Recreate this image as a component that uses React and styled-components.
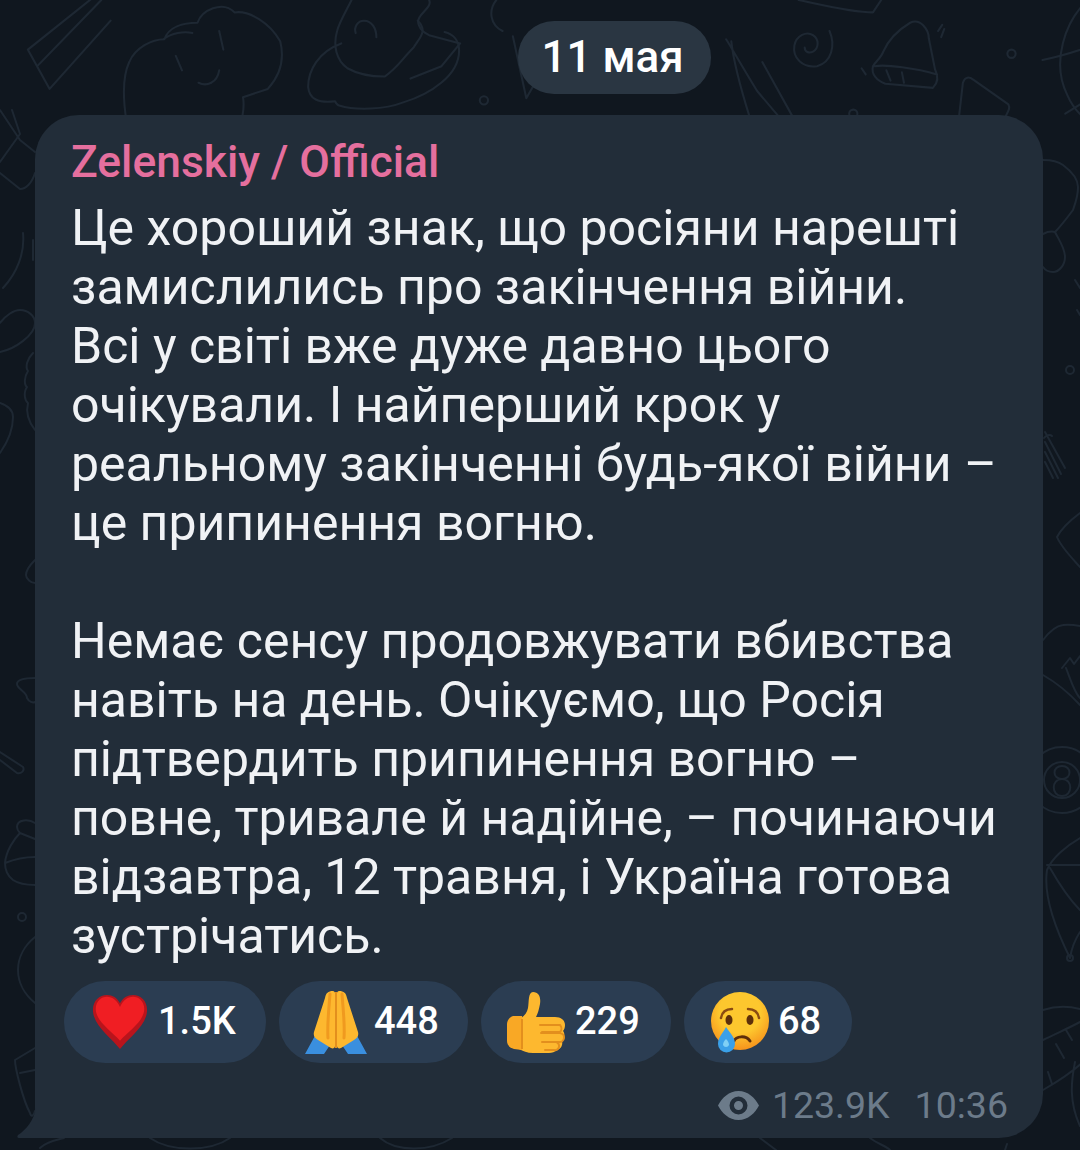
import React from 'react';
import styled, { createGlobalStyle } from 'styled-components';

const GlobalStyle = createGlobalStyle`
  html, body {
    margin: 0;
    padding: 0;
    background: #10171f;
  }
`;

const Page = styled.div`
  position: relative;
  width: 1080px;
  height: 1150px;
  overflow: hidden;
  background: #10171f;
  font-family: Roboto, "Noto Sans", sans-serif;
  display: flex;
  flex-direction: column;
  align-items: flex-start;
  padding-top: 21px;
  box-sizing: border-box;
`;

const Doodles = styled.svg`
  position: absolute;
  inset: 0;
  fill: none;
  stroke: #1e2833;
  stroke-width: 2;
  stroke-linecap: round;
  stroke-linejoin: round;
`;

const DatePill = styled.div`
  position: relative;
  margin-left: 518px;
  width: 193px;
  height: 73px;
  box-sizing: border-box;
  padding-right: 4px;
  border-radius: 36px;
  background: #2a3642;
  color: #fff;
  font-size: 44px;
  font-weight: 500;
  line-height: 73px;
  text-align: center;
`;

const Bubble = styled.div`
  position: relative;
  width: 1008px;
  height: 1023px;
  margin-top: 21px;
  margin-left: 35px;
  box-sizing: border-box;
  padding: 20px 0 0 36px;
  background: #222d39;
  border-radius: 44px 44px 44px 0;
`;

const Tail = styled.svg`
  position: absolute;
  left: -18px;
  bottom: 0;
  fill: #222d39;
`;

const Sender = styled.div`
  color: #e56f9e;
  font-size: 44.4px;
  font-weight: 500;
  line-height: 54px;
  margin-bottom: 10px;
`;

const Message = styled.div`
  color: #f0f2f5;
  font-size: 50px;
  line-height: 59px;
  white-space: nowrap;
`;

const Line = styled.div`
  height: 59px;
`;

const Reactions = styled.div`
  display: flex;
  gap: 13px;
  margin-top: 15px;
  margin-left: -7px;
`;

const Reaction = styled.div`
  display: flex;
  align-items: center;
  width: ${p => p.$w}px;
  height: 82px;
  box-sizing: border-box;
  padding-left: ${p => p.$pad}px;
  gap: ${p => p.$gap}px;
  border-radius: 41px;
  background: #2b3d52;
  color: #fff;
  font-size: 38px;
  font-weight: 500;
`;

const Count = styled.span`
  position: relative;
  top: -1px;
`;

const Footer = styled.div`
  position: absolute;
  right: 35px;
  bottom: 11px;
  display: flex;
  align-items: center;
  color: #6c7b8a;
  font-size: 37.5px;
  line-height: 44px;
`;

const Views = styled.span`
  margin: 0 25px 0 13px;
`;

const HeartEmoji = () => (
  <svg width="56" height="56" viewBox="0 0 60 60">
    <path d="M30 59C21 47 1 34 1 17 1 7 8 1 16 1c6 0 11 3 14 9C33 4 38 1 44 1c8 0 15 6 15 16 0 17-20 30-29 42z" fill="#b9141c" />
    <path d="M30 50C21 40 4 29 4 16 4 8 10 3 16 3c6 0 11 4 14 11 3-7 8-11 14-11 6 0 12 5 12 13 0 13-17 24-26 34z" fill="#f01e23" />
  </svg>
);

const PrayEmoji = () => (
  <svg width="62" height="63" viewBox="0 0 62 63">
    <path d="M0 63L12 41 25 54 19 63zM62 63L50 41 37 54 43 63z" fill="#3a8fdf" />
    <path d="M28 0c-5 0-7 2-8 7L9 41c-1 4 1 6 4 8l13 8c2 1 4 0 4-2V2c0-1-1-2-2-2z" fill="#fdb82f" />
    <path d="M34 0c5 0 7 2 8 7l11 34c1 4-1 6-4 8l-13 8c-2 1-4 0-4-2V2c0-1 1-2 2-2z" fill="#fdb82f" />
    <path d="M25 3c-1 14-3 30-2 44M37 3c1 14 3 30 2 44" stroke="#f09a1f" strokeWidth="3" fill="none" strokeLinecap="round" />
    <path d="M31 1v56" stroke="#e38f1d" strokeWidth="2" fill="none" />
  </svg>
);

const ThumbEmoji = () => (
  <svg width="59" height="61" viewBox="0 0 59 61">
    <path d="M26 0c6 0 8 5 7 12-1 5-2 9-4 13h19c6 0 10 3 10 8 0 3-1 5-2 6 2 2 2 7-1 10 1 4-1 8-5 9-2 2-5 3-8 3H26c-6 0-10-2-14-4V27c5-2 8-6 9-11 1-6 0-16 5-16z" fill="#fdb82f" />
    <path d="M6 24c-3 1-6 4-6 8v17c0 4 3 7 7 8l8 1V24z" fill="#f9a825" />
    <path d="M33 33h20a5 5 0 0 1 0 7H35M34 41h19a4.500 4.500 0 0 1-1 9H35M35 50h14a4 4 0 0 1-2 8H38" stroke="#e38f1d" strokeWidth="2" fill="none" strokeLinecap="round" />
    <path d="M15 27v30" stroke="#e38f1d" strokeWidth="2" fill="none" />
  </svg>
);

const CryEmoji = () => (
  <svg width="58" height="62" viewBox="0 0 58 62">
    <defs>
      <radialGradient id="cryFace" cx="50%" cy="35%" r="65%">
        <stop offset="55%" stopColor="#fdc72e" />
        <stop offset="100%" stopColor="#f6931c" />
      </radialGradient>
    </defs>
    <circle cx="29" cy="30" r="29" fill="url(#cryFace)" />
    <path d="M10 27c1-6 5-9 11-9M48 27c-1-6-5-9-11-9" stroke="#8a4b12" strokeWidth="2.500" fill="none" strokeLinecap="round" />
    <ellipse cx="18" cy="29" rx="3.500" ry="5" fill="#5d2f0a" />
    <ellipse cx="39" cy="29" rx="3.500" ry="5" fill="#5d2f0a" />
    <path d="M23 50c2-5 12-6 16 0" stroke="#5d2f0a" strokeWidth="3" fill="none" strokeLinecap="round" />
    <path d="M15 36c-3 6-8 10-8 17a8.500 8.500 0 0 0 17 0c0-7-5-11-9-17z" fill="#3aa0e8" />
    <path d="M15 48c-2 2-3 4-3 6a3.200 3.200 0 0 0 6 0c0-2-1-4-3-6z" fill="#7fd0f5" />
  </svg>
);

const EyeIcon = () => (
  <svg width="41" height="31" viewBox="0 0 41 31">
    <path fillRule="evenodd" fill="#6c7b8a" d="M20.500 1C30 1 37 8 41 15.500 37 23 30 30 20.500 30S4 23 0 15.500C4 8 11 1 20.500 1zm0 5.500a9 9 0 1 0 0 18 9 9 0 0 0 0-18zm0 4.500a4.500 4.500 0 1 1 0 9 4.500 4.500 0 0 1 0-9z" />
  </svg>
);

const firstParagraph = [
  'Це хороший знак, що росіяни нарешті',
  'замислились про закінчення війни.',
  'Всі у світі вже дуже давно цього',
  'очікували. І найперший крок у',
  'реальному закінченні будь-якої війни –',
  'це припинення вогню.',
];

const secondParagraph = [
  'Немає сенсу продовжувати вбивства',
  'навіть на день. Очікуємо, що Росія',
  'підтвердить припинення вогню –',
  'повне, тривале й надійне, – починаючи',
  'відзавтра, 12 травня, і Україна готова',
  'зустрічатись.',
];

const reactions = [
  { icon: <HeartEmoji />, count: '1.5K', w: 202, pad: 28, gap: 10 },
  { icon: <PrayEmoji />, count: '448', w: 189, pad: 26, gap: 7 },
  { icon: <ThumbEmoji />, count: '229', w: 190, pad: 26, gap: 9 },
  { icon: <CryEmoji />, count: '68', w: 168, pad: 27, gap: 9 },
];

const App = () => (
  <Page>
    <GlobalStyle />
    <Doodles width="1080" height="1150" viewBox="0 0 1080 1150">
      <g transform="scale(1.034)">
        <path d="M27 48L92 -4M107 20L48 86 27 48M37 63L98 0" />
        <path d="M122 115c-3-20-4-40 3-55 6-14 22-22 34-22 4-12 18-16 32-16 4-12 24-22 36-10 14-2 34 10 44 28 5 20-1 34-12 46l-24 8c2 12-1 22-4 30M158 38c8-6 20-8 28-6M212 30l4 18M170 54l6 14M212 68c-2 12-12 16-20 12" />
        <path d="M330 42c-22 8-32 26-32 42 1 12 10 16 26 14 2 4 4 4 4 4 16 5 44 4 62-3 26-8 54-26 54-50 0-10-6-16-14-18M340 0c-6 12-12 22-14 30-4 14-1 28 10 36 14 8 28 8 36 8 12-8 16-16 28-28 6-10 14-16 4-26" />
        <path d="M344 32c-2-6 2-12 8-12 8 0 12 8 12 16" />
        <path d="M415 0c4 8-14 14-10 24 2 6 6 8 10 10l30 8-18 22-30 12" />
        <circle cx="468" cy="97" r="4" />
        <path d="M480 0c-8 10-6 24 6 30M496 35l13 60 8-14" />
      </g>
      <g transform="translate(540 0) scale(1.034) translate(-540 0)">
        <path d="M720 38c4 6 14 24 30 50l22 26M725 40c2 18 8 42 18 74M755 60l30 54" />
        <path d="M820 30c6 14 2 30-12 34-14 2-24-8-22-20 2-10 12-14 18-10 6 4 6 12 0 16-4 2-8 0-8-4" />
        <path d="M898 22c-10 6-20 14-26 28-2 6-8 10-10 14-2 8 4 14 12 17l46 4c4-4 6-10 2-18l-6-30c0-8-8-20-18-15zM864 64c10-2 40 2 60 8M875 68l4 10M890 70l2 10M925 30l4-6M928 36l3-8M855 72l-4-6" />
        <circle cx="996" cy="52" r="4" />
        <circle cx="843" cy="110" r="4" />
        <path d="M945 115l4-35c2-6 6-6 10-3l34 24c2 4 0 6-4 14" />
        <path d="M1070 0c-22 20-36 60-20 92 6 14 16 24 30 30M1026 58c20-4 38-10 54-16M1048 110l32-20" />
        <path d="M790 0c20 4 50 12 72 12l8-12" />
      </g>

      {/* right strip */}
      <path d="M1043 160c8 0 16 2 20 5 8 6 15 14 15 22 0 10-3 17-5 23-6 8-12 16-18 22 4 8 10 16 10 25 0 8-6 15-12 15-4 0-8-2-10-5" />
      <path d="M1055 232c-4-1-8 0-12 2M1075 280l5 8M1077 310l3 5" />
      <circle cx="1070" cy="370" r="4" />
      <path d="M1045 432l20 36M1045 442l16 32M1045 452l13 26M1045 462l8 16M1044 438c2-3 6-4 8-2" />
      <path d="M1080 513c-8 6-18 14-23 24 4 10 14 20 23 30" />
      <path d="M1043 640c6-8 12-14 20-15 6-1 12 0 17 1M1062 668l8-10 4 6 6-8M1043 675c14 8 26 18 37 30M1066 668c4 10 8 24 14 30" />
      <circle cx="1062" cy="780" r="33" />
      <circle cx="1062" cy="780" r="18" />
      <path d="M1062 766c-10 0-10 13 0 13 11 0 11 17 0 17-11 0-11-17 0-17 10 0 10-13 0-13z" />
      <path d="M1080 838c-14 8-28 20-33 32-3 20 2 46 23 88M1047 865h33M1050 868c8 14 18 30 30 42M1070 958c2-12 6-20 10-26" />
      <circle cx="1070" cy="958" r="3" />
      <path d="M1043 1010c12-4 26-4 37-1M1043 1040c12-6 26-12 37-18M1043 1090c14-8 32-20 42-30M1056 1044l8 14M1066 1030l6 10M1048 1072l4 12M1075 1062c-4 20-6 40 5 64" />

      {/* left strip */}
      <path d="M0 110l20 30 15 12M12 110l8 24-20 28M0 173l20 16c6 0 12-6 15-16" />
      <path d="M23 233c2 20-6 40-20 55M33 240v20" />
      <path d="M0 323c6-8 14-13 20-13 8 0 15 6 15 13 0 12-20 26-35 29" />
      <path d="M33 353c-6 6-8 14-5 18-4 6-4 14-1 16-4 6-2 14 1 16-2 8 0 18 7 27" />
      <path d="M0 403c6 2 13 6 13 14 0 12-6 26-13 36" />
      <path d="M35 560c-4 4-9 10-9 15 0 4 5 8 9 8" />
      <path d="M35 678c-6 0-18 0-18 6 0 5 10 8 10 14 2 4 6 5 8 4" />
      <path d="M0 752l23 15c2 4-2 7-6 6L0 760" />
      <path d="M35 823c-6-4-18-4-18 4 0 3 2 5 3 6-6 6-14 18-15 30 0 8 4 14 8 17 6 4 14 5 22 5M5 863c10-4 20-6 30-6M20 833l15 6" />
      <circle cx="22" cy="917" r="4" />
      <path d="M35 937c-10 8-17 20-17 33s7 25 17 33" />
      <path d="M35 1048l-20 12c0 8 8 40 15 53 1 4 3 4 5-2M20 1073l15-3" />

      {/* under the bubble */}
      <path d="M40 1148c6-6 16-8 24-10M150 1138c20 14 60 14 80 0M380 1138c16 14 50 14 72 0M760 1138l16 12M870 1138c8 6 16 8 20 12M1005 1150l2-6" />
    </Doodles>
    <DatePill>11 мая</DatePill>
    <Bubble>
      <Tail width="19" height="30" viewBox="0 0 19 30">
        <path d="M19 0C17 12 9 22 1 27c-1 1-1 3 1 3h17z" />
      </Tail>
      <Sender>Zelenskiy / Official</Sender>
      <Message>
        {firstParagraph.map(text => <Line key={text}>{text}</Line>)}
        <Line />
        {secondParagraph.map(text => <Line key={text}>{text}</Line>)}
      </Message>
      <Reactions>
        {reactions.map(r => (
          <Reaction key={r.count} $w={r.w} $pad={r.pad} $gap={r.gap}>
            {r.icon}
            <Count>{r.count}</Count>
          </Reaction>
        ))}
      </Reactions>
      <Footer>
        <EyeIcon />
        <Views>123.9K</Views>
        10:36
      </Footer>
    </Bubble>
  </Page>
);

export default App;
